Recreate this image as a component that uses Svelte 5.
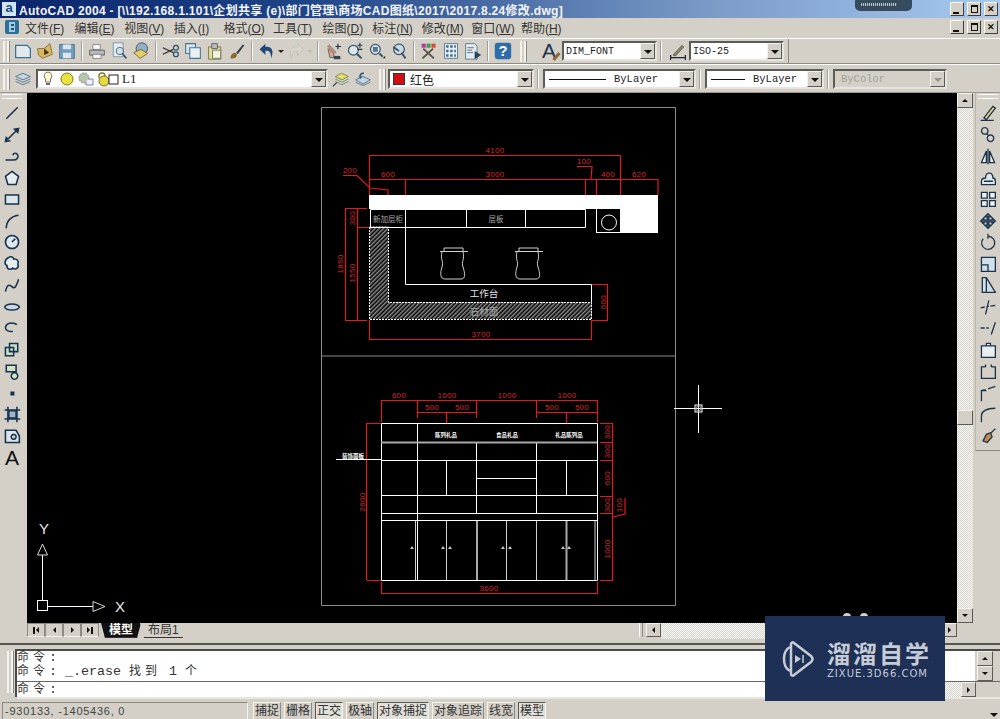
<script>
  const menus = [
    ['文件', 'F'], ['编辑', 'E'], ['视图', 'V'], ['插入', 'I'], ['格式', 'O'], ['工具', 'T'],
    ['绘图', 'D'], ['标注', 'N'], ['修改', 'M'], ['窗口', 'W'], ['帮助', 'H'],
  ];
  const statusButtons = [
    ['捕捉', false], ['栅格', false], ['正交', true], ['极轴', false],
    ['对象捕捉', true], ['对象追踪', false], ['线宽', false], ['模型', true],
  ];

  // left draw toolbar, top to bottom
  const drawIcons = [
    { d: 'M4 18 18 4' },
    { d: 'M3 19 19 3M3 19l5-1-4-4zM19 3l-5 1 4 4z' },
    { d: 'M3 16h9c6 0 7-4 6-6-1-3-5-3-6 0' },
    { d: 'M11 3l8 6-3 10H6L3 9z', f: '#e4ecf0' },
    { d: 'M3 6h16v11H3z', f: '#dde6eb' },
    { d: 'M4 20C4 11 10 5 19 4' },
    { d: 'M11 3a8 8 0 1 0 .1 0M11 11l4-4', f: '#dce7ee' },
    { d: 'M7 3c3-2 6 0 6 2 4-1 7 3 5 6 2 4-2 8-6 5-3 3-8 1-7-3-4-2-3-8 2-10', f: '#e6edf1' },
    { d: 'M3 19c2-9 5-9 8-6s5 1 8-9' },
    { d: 'M2 11c2-5 16-5 18 0-2 5-16 5-18 0', f: '#c9d8e2' },
    { d: 'M17 7C12 3 3 5 3 11c0 3 5 5 9 4' },
    { d: 'M8 3h10v10H8zM3 8h10v10H3z', f: '#cfe0c8' },
    { d: 'M4 4h12v8H4zM14 13a4 4 0 1 0 .1 0', f: '#d5e2c0' },
    { d: 'M10 10h3v3h-3z', f: '#17324e' },
    { d: 'M6 2v19M17 2v19M2 6h19M2 17h19M7 7h9v9H7z', f: '#9fb3c2' },
    { d: 'M3 4h13l4 7v8H3zM13 9a3 3 0 1 0 .1 0', f: '#dce6ec' },
  ];
  // right modify toolbar
  const modifyIcons = [
    { d: 'M6 17 17 3l3 2L9 19zM2 20h16', f: '#e6d48a' },
    { d: 'M7 2a4 4 0 1 0 .1 0M14 11a4 4 0 1 0 .1 0M9 9l3 3' },
    { d: 'M9 5v14H3zM13 5v14h6zM11 2v19', f: '#e8edf0' },
    { d: 'M3 19v-4c0-4 4-4 5-4 0-8 9-8 9 0 2 0 3 2 3 4v4zM6 15h11', f: '#dce8ef' },
    { d: 'M3 3h7v7H3zM13 3h7v7h-7zM3 13h7v7H3zM13 13h7v7h-7z', f: '#eef1f2' },
    { d: 'M11 2l4 4h-3v4h4V7l4 4-4 4v-3h-4v4h3l-4 4-4-4h3v-4H6v3l-4-4 4-4v3h4V6H7z', f: '#3b6c98' },
    { d: 'M5 7a8 8 0 1 0 6-3M11 1v6' },
    { d: 'M3 3h17v17H3zM3 12h8v8', f: '#cfe0ec' },
    { d: 'M4 2h5l11 18H4zM9 2v18', f: '#cfdde6' },
    { d: 'M2 12l5-1M9 11l3-1M14 10l6-1M12 3l-4 17' },
    { d: 'M2 11h5M9 11h3M15 19l5-15' },
    { d: 'M3 6h17v14H3zM9 6V3h5v3', f: '#e9eef0' },
    { d: 'M8 6H3v14h17V6h-5M8 6V3M15 6V3', f: 'none' },
    { d: 'M3 21V8l5-1M11 6l9-3M3 8h6' },
    { d: 'M3 21v-8C3 8 9 4 20 4' },
    { d: 'M5 17l4-8 5-2 2 5-6 7zM15 7l5-5', f: '#c08a50' },
  ];
</script>

<div class="app">
  <header class="title">
    <span class="appicon">a</span>
    <span class="title-text">AutoCAD 2004 - [\\192.168.1.101\企划共享 (e)\部门管理\商场CAD图纸\2017\2017.8.24修改.dwg]</span>
    <span class="tray"></span>
    <span class="wbtns">
      <button class="wb"><span class="min"></span></button>
      <button class="wb"><span class="max"></span></button>
      <button class="wb x">✕</button>
    </span>
  </header>

  <nav class="menu">
    <svg class="docicon" width="16" height="16" viewBox="0 0 16 16"><rect x="1" y="1" width="14" height="14" rx="2" fill="#2d6f96"/><path d="M5 3h6v10H5z" fill="#9dd0e2"/><path d="M7 5h3v2H7zM7 9h3v2H7z" fill="#244f78"/></svg>
    {#each menus as m}
      <span class="mi">{m[0]}(<u>{m[1]}</u>)</span>
    {/each}
    <span class="wbtns doc">
      <button class="wb"><span class="min"></span></button>
      <button class="wb"><span class="max"></span></button>
      <button class="wb x">✕</button>
    </span>
  </nav>

  <div class="bar bar1">
    <div class="tools">
      <i class="grip"></i>
      <svg class="t" viewBox="0 0 22 22"><path d="M2 4h14l4 4v11H2z" fill="#dfe9ee" stroke="#3f6f8f" stroke-width="1.500"/></svg>
      <svg class="t" viewBox="0 0 22 22"><path d="M2 8h8l7-6 3 13-12 5-5-4z" fill="#d9b560" stroke="#7b6a3a"/><path d="M10 8l6 5-6 3z" fill="#3c3216"/></svg>
      <svg class="t" viewBox="0 0 22 22"><path d="M2 3h18v17H2z" fill="#6f9dc0" stroke="#426a8c"/><path d="M6 3h10v6H6zM6 13h10v7H6z" fill="#dde5ea"/></svg>
      <i class="sep"></i>
      <svg class="t" viewBox="0 0 22 22"><path d="M6 3h9v6H6z" fill="#fff" stroke="#777"/><path d="M2 10h18v6H2z" fill="#b9b9c0" stroke="#555"/><path d="M6 15h10v5H6z" fill="#fff" stroke="#777"/></svg>
      <svg class="t" viewBox="0 0 22 22"><path d="M4 1h12v17H4z" fill="#e6eef2" stroke="#6b8aa0"/><circle cx="12" cy="11" r="4.500" fill="#cfe2ee" stroke="#35556e"/><path d="M15 14l5 6" stroke="#35556e" stroke-width="2"/></svg>
      <svg class="t" viewBox="0 0 22 22"><circle cx="12" cy="8" r="7" fill="#8fb0c6" stroke="#445"/><path d="M2 13l9-4 8 5-9 6z" fill="#e5cf6b" stroke="#6b5b24"/></svg>
      <i class="sep"></i>
      <svg class="t" viewBox="0 0 22 22"><path d="M1 7l13 6M1 15l13-6" stroke="#333" stroke-width="1.500"/><circle cx="17" cy="7" r="3" fill="none" stroke="#2c4f72" stroke-width="1.500"/><circle cx="17" cy="15" r="3" fill="none" stroke="#2c4f72" stroke-width="1.500"/></svg>
      <svg class="t" viewBox="0 0 22 22"><path d="M2 2h12v12H2z" fill="#d7e4ec" stroke="#4b7391" stroke-width="1.300"/><path d="M7 7h13v13H7z" fill="#e8f0f4" stroke="#4b7391" stroke-width="1.300"/></svg>
      <svg class="t" viewBox="0 0 22 22"><path d="M3 6h15v15H3z" fill="#e0dca0" stroke="#6a6a3c"/><path d="M7 2h7v6H7z" fill="#bbb" stroke="#555"/><path d="M8 10h10v10H8z" fill="#f2f2e2" stroke="#6a6a3c"/></svg>
      <svg class="t" viewBox="0 0 22 22"><path d="M3 20c0-4 2-7 6-7l2 2c0 4-3 6-8 5z" fill="#8b6c2e"/><path d="M10 13l8-10 2 1-8 11z" fill="#36404a"/></svg>
      <i class="sep"></i>
      <svg class="t" viewBox="0 0 22 22"><path d="M9 2 2 9l7 7v-5c5-1 7 2 7 9 4-9 1-15-7-14z" fill="#1f4a78"/></svg>
      <span class="drop"></span>
      <svg class="t off" viewBox="0 0 22 22"><path d="M13 2l7 7-7 7v-5c-5-1-7 2-7 9-4-9-1-15 7-14z" fill="#dad7cf" stroke="#bdbab2"/></svg>
      <span class="drop off"></span>
      <i class="sep"></i>
      <svg class="t" viewBox="0 0 22 22"><path d="M5 8l5 5 2-2v8H7z" fill="#c8a79c" stroke="#6b5248"/><path d="M5 4l9 10" stroke="#b08d80" stroke-width="4"/><path d="M17 2v7M14 5.500h7" stroke="#234" stroke-width="1.500"/><path d="M12 17h8v4h-8z" fill="#345"/></svg>
      <svg class="t" viewBox="0 0 22 22"><circle cx="9" cy="10" r="6" fill="#dbe8ef" stroke="#39536a" stroke-width="1.500"/><path d="M13 14l6 6" stroke="#39536a" stroke-width="2.500"/><path d="M17 1v6M14 4h6M14 9h6" stroke="#234" stroke-width="1.300"/></svg>
      <svg class="t" viewBox="0 0 22 22"><circle cx="9" cy="9" r="6" fill="#dbe8ef" stroke="#39536a" stroke-width="1.500"/><path d="M6 6h6v6H6z" fill="#58748a"/><path d="M14 14l4 4" stroke="#39536a" stroke-width="2.500"/><path d="M18 20h3v-3z" fill="#111"/></svg>
      <svg class="t" viewBox="0 0 22 22"><circle cx="11" cy="9" r="6.500" fill="#c9dce6" stroke="#39536a" stroke-width="1.500"/><path d="M14 13l5 7M4 6l7 5" stroke="#39536a" stroke-width="2.200"/></svg>
      <i class="sep"></i>
      <svg class="t" viewBox="0 0 22 22"><path d="M2 2h5v5H2z" fill="#b13a9c"/><path d="M8 2h5v5H8z" fill="#3d9c4a"/><path d="M14 2h5v5h-5z" fill="#d84a3a"/><path d="M4 8l13 12M3 20l13-12" stroke="#57504a" stroke-width="2.200"/></svg>
      <svg class="t" viewBox="0 0 22 22"><path d="M3 2h16v18H3z" fill="#e9eef2" stroke="#4a6c86"/><path d="M5 4h3v3H5zM10 4h3v3h-3zM15 4h2v3h-2zM5 9.500h3v3H5zM10 9.500h3v3h-3zM15 9.500h2v3h-2zM5 15h3v3H5zM10 15h3v3h-3zM15 15h2v3h-2z" fill="#3a6a92"/></svg>
      <svg class="t" viewBox="0 0 22 22"><path d="M2 2h11l3 3v16H2z" fill="#e6ebef" stroke="#4a6c86"/><path d="M4 7h8M4 10h6M4 13h7" stroke="#3a5a78"/><path d="M13 11l8 5-8 5z" fill="#24445f"/></svg>
      <i class="sep"></i>
      <svg class="t help" viewBox="0 0 22 22"><rect x="1" y="1" width="20" height="20" rx="3" fill="#2f6da8"/><text x="11" y="17" text-anchor="middle">?</text></svg>
    </div>
    <div class="tools styles">
      <i class="grip"></i>
      <span class="afont">A</span>
      <div class="combo w-font"><span>DIM_FONT</span><b></b></div>
      <i class="sep"></i>
      <svg class="t dimi" viewBox="0 0 22 22"><path d="M2 19h18M2 16v6M20 16v6" stroke="#223" stroke-width="1.500"/><path d="M5 16 16 4l2 2L8 17z" fill="#8d8775" stroke="#554"/></svg>
      <div class="combo w-dim"><span>ISO-25</span><b></b></div>
    </div>
  </div>

  <div class="bar bar2">
    <div class="tools props">
      <i class="grip"></i>
      <svg class="t" viewBox="0 0 22 22"><path d="M11 4l9 4-9 4-9-4z" fill="#c3d6e2" stroke="#496b84"/><path d="M2 11l9 4 9-4M2 14l9 4 9-4" fill="none" stroke="#496b84"/></svg>
      <div class="combo w-layer">
        <svg class="layer-i" width="78" height="16" viewBox="0 0 78 16">
          <path d="M7 1a4 4 0 0 1 2.500 7v3h-5V8A4 4 0 0 1 7 1z" fill="#fff9c8" stroke="#777"/><path d="M5 13h4" stroke="#666" stroke-width="2"/>
          <circle cx="26" cy="8" r="6" fill="#e9e23c" stroke="#77783a"/>
          <circle cx="43" cy="7" r="5" fill="#b7c5b0" stroke="#7f8e80" stroke-dasharray="2 1"/><path d="M47 8h5v6h-7v-3" fill="#eef" stroke="#7a8a96"/>
          <path d="M58 7V5a3 3 0 0 1 6 0v3" fill="none" stroke="#8a7a20" stroke-width="1.400"/><circle cx="63" cy="10" r="5" fill="#e7da3c" stroke="#7a7028"/>
          <rect x="68" y="4" width="9" height="9" fill="#fff" stroke="#222"/>
        </svg>
        <span class="l1">L1</span><b></b>
      </div>
      <svg class="t" viewBox="0 0 22 22"><path d="M12 4l8 4-8 4-8-4z" fill="#e8dc6a" stroke="#6d7a44"/><path d="M4 11l8 4 8-4M4 14l8 4 8-4" fill="none" stroke="#5f8a62"/><path d="M1 20l5-5" stroke="#234" stroke-width="1.300"/></svg>
      <svg class="t" viewBox="0 0 22 22"><path d="M11 8l9 4-9 5-9-5z" fill="#c2d6e4" stroke="#496b84"/><path d="M2 15l9 4 9-4" fill="none" stroke="#496b84"/><path d="M12 3c-4 0-6 2-5 5l-2-1 3 4 2-4-2 1c0-2 2-3 4-3z" fill="#23507c"/></svg>
    </div>
    <div class="tools props rest">
      <i class="grip"></i>
      <div class="combo w-color"><em class="swatch"></em><span>红色</span><b></b></div>
      <i class="sep"></i>
      <div class="combo w-lt1"><hr /><span>ByLayer</span><b></b></div>
      <i class="sep"></i>
      <div class="combo w-lt2"><hr /><span>ByLayer</span><b></b></div>
      <i class="sep"></i>
      <div class="combo w-plot"><span>ByColor</span><b></b></div>
    </div>
  </div>

  <main class="work">
    <aside class="side left">
      <i class="hgrip"></i>
      {#each drawIcons as ic}
        <svg class="s" viewBox="0 0 22 22"><path d={ic.d} fill={ic.f || 'none'} stroke="#17324e" stroke-width="1.900"/></svg>
      {/each}
      <span class="atext">A</span>
    </aside>

    <div class="docwin">
      <div class="canvasrow">
        <div class="canvas">
          <svg class="drawing" width="930" height="530" viewBox="27 93 930 530">
            <defs>
              <pattern id="hatch" width="3" height="3" patternUnits="userSpaceOnUse" patternTransform="rotate(45)">
                <rect width="3" height="3" fill="#000"/>
                <rect width="1.500" height="3" fill="#8a8a8a"/>
              </pattern>
            </defs>
            <path class="frame" d="M321.500 107.500H675.500V605.500H321.500ZM321.500 356H675"/>

            <!-- upper plan: red dimensions -->
            <g class="red">
              <path d="M369 155.500H620.500M369.500 155V195M620.500 155V195"/>
              <path d="M369 179.500H658M405.500 179V195M585.500 179V195M596.500 179V195M658 179V195"/>
              <path d="M343 175.500H357L370 188 388 190V195"/>
              <path d="M577 166.500H592L591 179"/>
              <path d="M345 208.500H367M345 320.500H367M345.500 208V320M357.500 208V320M357 227.500H369"/>
              <path d="M369.500 320V339.500H591.500V320"/>
              <path d="M592 284.500H608M592 320.500H608M607.500 284V320"/>
            </g>
            <g class="dim">
              <text x="495" y="153">4100</text>
              <text x="388" y="177">600</text>
              <text x="495" y="177">3000</text>
              <text x="584" y="164">100</text>
              <text x="608" y="177">400</text>
              <text x="639" y="177">620</text>
              <text x="350" y="173">200</text>
              <text x="481" y="337">3700</text>
              <text transform="translate(343 264) rotate(-90)">1850</text>
              <text transform="translate(355 218) rotate(-90)">300</text>
              <text transform="translate(355 273) rotate(-90)">1550</text>
              <text transform="translate(606 302) rotate(-90)">600</text>
            </g>

            <!-- upper plan: white geometry -->
            <rect x="369" y="195" width="289" height="14" fill="#fff"/>
            <rect x="596" y="209" width="62" height="24" fill="#fff"/>
            <rect x="597" y="209" width="23" height="23" fill="#000"/>
            <circle cx="609" cy="222.500" r="7.500" fill="none" stroke="#fff"/>
            <path d="M370 227H388V302H592V319H370Z" fill="url(#hatch)"/>
            <g class="white">
              <path d="M370.500 209.500H585.500V227.500H370.500ZM405.500 209.500V284.500H591.500V302M466.500 209V227M525.500 209V227"/>
              <path d="M369.500 227V319.500H591.500V302.500H388.500V227H369.500" stroke-dasharray="2 1"/>
            </g>
            <g class="chair">
              <path transform="translate(441 0)" d="M-1 251.500H27M3 251V248H22V251M1 252c-2 8 2 9 0 15s-2 12 3 12H20c5 0 4-6 2-12s2-7 0-15"/>
              <path transform="translate(516 0)" d="M-1 251.500H27M3 251V248H22V251M1 252c-2 8 2 9 0 15s-2 12 3 12H20c5 0 4-6 2-12s2-7 0-15"/>
            </g>
            <g class="lab">
              <text x="484" y="297" class="big">工作台</text>
              <text x="484" y="315" class="big grey">石材面</text>
              <text x="388" y="222" class="small grey">新加层柜</text>
              <text x="496" y="222" class="small grey">层板</text>
            </g>

            <!-- lower elevation: red dimensions -->
            <g class="red">
              <path d="M381.500 400.500H597.500M381.500 400V422M417.500 400V418M476.500 400V418M536.500 400V418M597.500 400V422"/>
              <path d="M417.500 412.500H476.500M536.500 412.500H597.500M446.500 412V423M566.500 412V423"/>
              <path d="M367 423.500H381M367 580.500H381M366.500 423V580"/>
              <path d="M381.500 582V593.500H597.500V582"/>
              <path d="M600 423.500H613M600 442.500H613M600 460.500H613M600 496.500H613M600 513.500H613M600 580.500H613M612.500 423V580M613 517 625 514V498"/>
            </g>
            <g class="dim">
              <text x="399" y="398">600</text>
              <text x="447" y="398">1000</text>
              <text x="507" y="398">1000</text>
              <text x="567" y="398">1000</text>
              <text x="432" y="410">500</text>
              <text x="462" y="410">500</text>
              <text x="552" y="410">500</text>
              <text x="582" y="410">500</text>
              <text x="489" y="591">3600</text>
              <text transform="translate(365 502) rotate(-90)">2600</text>
              <text transform="translate(610 432) rotate(-90)">300</text>
              <text transform="translate(610 451) rotate(-90)">300</text>
              <text transform="translate(610 478) rotate(-90)">600</text>
              <text transform="translate(610 505) rotate(-90)">300</text>
              <text transform="translate(622 505) rotate(-90)">100</text>
              <text transform="translate(610 549) rotate(-90)">1000</text>
            </g>

            <!-- lower elevation: white geometry -->
            <g class="white">
              <path d="M381.500 423.500H597.500V580.500H381.500ZM381 460.500H597M381 495.500H597M381 513.500H597M381 520.500H597"/>
              <path d="M417.500 423V580M476.500 442V514M536.500 442V514M446.500 460V496M566.500 460V496M477 478.500H536"/>
              <path d="M415.500 521V580M446.500 521V580M506.500 521V580M536.500 521V580M595 521V580" stroke="#cfcfcf"/>
              <path d="M381 442.500H597M477 521V580M566.500 521V580" stroke="#a8a8a8" stroke-width="2"/>
              <path d="M336 459.500H381"/>
            </g>
            <g class="lab">
              <text x="353" y="458" class="tiny">装饰面板</text>
              <text x="446" y="437" class="tiny">陈列礼品</text>
              <text x="507" y="437" class="tiny">食品礼品</text>
              <text x="569" y="437" class="tiny">礼品陈列品</text>
            </g>
            <path fill="#c8c8c8" d="M412 546l2 3h-4zM443 546l2 3h-4zM450 546l2 3h-4zM503 546l2 3h-4zM510 546l2 3h-4zM563 546l2 3h-4zM569 546l2 3h-4z"/>

            <!-- crosshair -->
            <g class="white">
              <path d="M698.500 385V433M674 408.500H722"/>
              <rect x="695" y="405" width="7" height="7"/>
            </g>
            <circle cx="698.500" cy="408.500" r="2.500" fill="none" stroke="#9a9a9a"/>

            <!-- ucs icon -->
            <g class="white">
              <path d="M42.500 555V600M48 606.500H93"/>
              <path d="M42.500 544l5 11h-10zM105 606.500l-12 5v-10z" stroke="#d8d8d8"/>
              <rect x="37.500" y="600.500" width="10" height="10"/>
            </g>
            <text x="44" y="534" class="ucs">Y</text>
            <text x="120" y="612" class="ucs">X</text>

            <circle cx="847" cy="617" r="4" fill="#d0d0d0"/>
            <circle cx="864" cy="617" r="4" fill="#d0d0d0"/>
          </svg>
        </div>
        <div class="vscroll">
          <button class="sb"><span class="up"></span></button>
          <div class="track v"><span class="thumb"></span></div>
          <button class="sb"><span class="down"></span></button>
        </div>
      </div>
      <div class="tabrow">
        <div class="navs">
          <button class="nav"><span class="bar-l"></span><span class="left-a"></span></button>
          <button class="nav"><span class="left-a"></span></button>
          <button class="nav"><span class="right-a"></span></button>
          <button class="nav"><span class="right-a"></span><span class="bar-l"></span></button>
        </div>
        <span class="tab active">模型</span>
        <span class="tab">布局1</span>
        <span class="tabfill"></span>
        <i class="splitter"></i>
        <button class="sb small"><span class="left-a"></span></button>
        <div class="track h"></div>
        <button class="sb small"><span class="right-a"></span></button>
      </div>
    </div>

    <aside class="side right">
      <i class="hgrip"></i>
      {#each modifyIcons as ic}
        <svg class="s" viewBox="0 0 22 22"><path d={ic.d} fill={ic.f || 'none'} stroke="#1e3347" stroke-width="1.600"/></svg>
      {/each}
    </aside>
  </main>

  <section class="command">
    <i class="vgrip"></i>
    <div class="cmdbox">
      <div class="cmdlog">
        <div class="cmdlines">
          <p><span class="wide">命令</span>:</p>
          <p><span class="wide">命令</span>: _.erase <span class="wide">找到</span> 1 <span class="wide">个</span></p>
        </div>
        <div class="cmdscroll">
          <button class="sb"><span class="up"></span></button>
          <button class="sb"><span class="down"></span></button>
        </div>
      </div>
      <div class="cmdinput">
        <p><span class="wide">命令</span>:</p>
        <div class="inscroll">
          <div class="track h"></div>
          <button class="sb small"><span class="right-a"></span></button>
        </div>
      </div>
    </div>
  </section>

  <footer class="status">
    <span class="coords">-930133, -1405436, 0</span>
    {#each statusButtons as b}
      <span class="sbtn" class:on={b[1]}>{b[0]}</span>
    {/each}
    <span class="menu-arrow"></span>
  </footer>

  <div class="logo">
    <svg width="40" height="40" viewBox="0 0 40 40" fill="none" stroke="#c6ccd6" stroke-width="2.500">
      <path d="M12 8c-4 2-6 5-6 12s2 10 6 12"/>
      <path d="M13 5c0-2 2-2 3-1l17 13c2 2 2 4 0 6L16 36c-1 1-3 1-3-1z"/>
      <path d="M17 16l6 4-6 4z" fill="#c6ccd6" stroke="none"/>
      <path d="M25 16v8" stroke-width="1.500"/>
    </svg>
    <div class="logotext">
      <strong>溜溜自学</strong>
      <small>ZIXUE.3D66.COM</small>
    </div>
  </div>
</div>

<style>
  :global(body) {
    margin: 0;
    background: #d4d0c8;
  }
  .app {
    position: relative;
    width: 1000px;
    height: 719px;
    overflow: hidden;
    display: flex;
    flex-direction: column;
    background: #d4d0c8;
    font-family: "Liberation Sans", "Noto Sans CJK SC", sans-serif;
    font-size: 12px;
    color: #222;
  }
  button {
    padding: 0;
    font: inherit;
  }

  /* title */
  .title {
    position: relative;
    height: 18px;
    flex: none;
    display: flex;
    align-items: center;
    gap: 3px;
    padding: 0 2px;
    background: linear-gradient(90deg, #0a246a 0%, #1e4488 30%, #7d9cc8 72%, #a6caf0 100%);
    color: #f4f6fa;
    font-weight: 700;
    font-size: 12px;
    white-space: nowrap;
  }
  .title-text {
    letter-spacing: 0.300px;
  }
  .appicon {
    width: 14px;
    height: 14px;
    background: #cfe4ee;
    color: #1a4a82;
    font-size: 13px;
    line-height: 12px;
    text-align: center;
  }
  .tray {
    position: absolute;
    left: 855px;
    top: 0;
    width: 57px;
    height: 11px;
    border-radius: 0 0 5px 5px;
    padding: 3px 15px 5px 6px;
    box-sizing: border-box;
    background: repeating-linear-gradient(90deg, #a9c3b4 0 1px, #4a5c6e 1px 2px) content-box, #364a60;
  }
  .wbtns {
    margin-left: auto;
    display: flex;
    gap: 3px;
  }
  .wb {
    width: 12px;
    height: 12px;
    background: #d4d0c8;
    border: 1px solid;
    border-color: #fff #404040 #404040 #fff;
    display: flex;
    align-items: center;
    justify-content: center;
    color: #111;
    font-size: 9px;
    font-weight: 700;
    box-sizing: content-box;
  }
  .min {
    width: 6px;
    height: 2px;
    background: #111;
    margin-top: 7px;
    margin-right: 2px;
  }
  .max {
    width: 5px;
    height: 5px;
    border: 1px solid #111;
    border-top-width: 2px;
  }

  /* menu */
  .menu {
    height: 20px;
    flex: none;
    display: flex;
    align-items: center;
    padding: 0 2px 2px 4px;
    box-sizing: border-box;
    font-size: 12px;
    color: #333;
    white-space: nowrap;
  }
  .docicon {
    margin-right: 5px;
  }
  .mi {
    width: 49.600px;
    flex: none;
  }
  .wbtns.doc {
    margin-left: auto;
  }

  /* toolbars */
  .bar {
    flex: none;
    display: flex;
    border-top: 1px solid #fff;
    box-sizing: border-box;
  }
  .bar1 {
    height: 26px;
    border-bottom: 1px solid #8c8a84;
  }
  .bar2 {
    height: 29px;
    border-bottom: 1px solid #9a9890;
    padding-top: 1px;
  }
  .tools {
    display: flex;
    align-items: center;
    height: 100%;
    padding-left: 3px;
  }
  .styles {
    margin-left: 3px;
    padding-right: 4px;
    border-right: 1px solid #8c8a84;
  }
  .rest {
    margin-left: 2px;
  }
  .grip {
    width: 6px;
    height: 21px;
    flex: none;
    margin-right: 3px;
    border-left: 2px solid #f4f2ec;
    border-right: 2px solid #f4f2ec;
    box-shadow: 1px 0 0 #8c8a84;
    box-sizing: border-box;
  }
  .sep {
    width: 0;
    height: 20px;
    flex: none;
    margin: 0 3px;
    border-left: 1px solid #a09e96;
    border-right: 1px solid #fff;
  }
  .rest .sep {
    margin: 0 4px 0 3px;
  }
  .t {
    width: 18px;
    height: 18px;
    flex: none;
    margin: 0 2px;
  }
  .t.off {
    opacity: 0.8;
  }
  .t.help text {
    fill: #fff;
    font-size: 18px;
    font-weight: 700;
    font-family: "Liberation Sans", sans-serif;
  }
  .t.dimi {
    margin-left: 4px;
  }
  .drop {
    width: 0;
    height: 0;
    flex: none;
    margin: 3px 1px 0 0;
    border: 3px solid transparent;
    border-top: 3px solid #222;
  }
  .drop.off {
    border-top-color: #bdbab2;
  }
  .afont {
    position: relative;
    font-size: 21px;
    color: #1d3553;
    width: 20px;
    margin-left: 13px;
    line-height: 20px;
  }
  .afont::after {
    content: '';
    position: absolute;
    right: 1px;
    bottom: 3px;
    width: 9px;
    height: 3px;
    background: #8a6a34;
    transform: rotate(-50deg);
  }
  .combo {
    position: relative;
    height: 20px;
    flex: none;
    display: flex;
    align-items: center;
    gap: 4px;
    padding-left: 2px;
    box-sizing: border-box;
    background: #fff;
    border: 2px solid;
    border-color: #5a5a56 #e6e4de #e6e4de #5a5a56;
    font-family: "Liberation Mono", "Noto Sans CJK SC", monospace;
    font-size: 10px;
    color: #222;
  }
  .combo b {
    position: absolute;
    top: 0;
    right: 0;
    bottom: 0;
    width: 15px;
    background: #d4d0c8;
    border: 1px solid;
    border-color: #f4f2ec #5a5a56 #5a5a56 #f4f2ec;
    box-sizing: border-box;
  }
  .combo b::after {
    content: '';
    position: absolute;
    left: 3px;
    top: 6px;
    border: 4px solid transparent;
    border-top: 4px solid #111;
  }
  .w-font { width: 95px; }
  .w-dim { width: 95px; }
  .w-layer { width: 292px; margin: 0 2px; padding-left: 3px; }
  .l1 {
    font-family: "Liberation Serif", serif;
    font-size: 13px;
    margin-left: -1px;
  }
  .w-color {
    width: 146px;
    font-family: "Liberation Sans", "Noto Sans CJK SC", sans-serif;
    font-size: 12px;
  }
  .w-lt1, .w-lt2, .w-plot { font-size: 10.500px; }
  .w-lt1 { width: 153px; }
  .w-lt2 { width: 119px; }
  .w-plot {
    width: 114px;
    padding-left: 6px;
    background: #d4d0c8;
    color: #a2a098;
  }
  .w-plot b::after { border-top-color: #95938c; }
  .swatch {
    width: 10px;
    height: 10px;
    background: #d00f14;
    outline: 1px solid #333;
    margin: 0 2px;
  }
  .combo hr {
    height: 1px;
    border: 0;
    margin: 0 4px 0 2px;
    background: #111;
    flex: none;
    width: 57px;
  }
  .w-lt2 hr { width: 34px; }

  /* work area */
  .work {
    height: 546px;
    flex: none;
    display: flex;
  }
  .side {
    flex: none;
    display: flex;
    flex-direction: column;
    align-items: center;
    box-sizing: border-box;
  }
  .side.left {
    width: 27px;
    padding-right: 3px;
  }
  .side.right {
    width: 25px;
    margin-left: 2px;
    height: 358px;
    border-left: 1px solid #bbb8b0;
    border-bottom: 1px solid #8c8a84;
  }
  .hgrip {
    width: 20px;
    height: 3px;
    flex: none;
    border-top: 1px solid #fff;
    border-bottom: 1px solid #fff;
    margin: 1px 0 5px;
  }
  .s {
    width: 18px;
    height: 18px;
    flex: none;
    margin-bottom: 3.500px;
  }
  .atext {
    font-size: 21px;
    line-height: 20px;
    color: #111;
  }
  .docwin {
    flex: 1;
    min-width: 0;
    display: flex;
    flex-direction: column;
  }
  .canvasrow {
    flex: 1;
    min-height: 0;
    display: flex;
  }
  .canvas {
    flex: 1;
    background: #000;
    overflow: hidden;
    min-width: 0;
  }
  .drawing {
    display: block;
  }
  .frame {
    fill: none;
    stroke: #8c8c8c;
  }
  .red {
    fill: none;
    stroke: #e01a20;
    stroke-width: 1.200;
  }
  .white {
    fill: none;
    stroke: #fff;
  }
  .dim text {
    font-family: "Liberation Sans", sans-serif;
    font-size: 8px;
    fill: #d8262c;
    text-anchor: middle;
    letter-spacing: 0.300px;
  }
  .chair {
    fill: none;
    stroke: #d0d0d0;
  }
  .lab text {
    fill: #fff;
    text-anchor: middle;
    font-family: "Noto Sans CJK SC", sans-serif;
  }
  .lab .big { font-size: 9.500px; fill: #e4e4e4; }
  .lab .small { font-size: 7.500px; }
  .lab .tiny { font-size: 5.500px; font-weight: 700; }
  .lab .grey { fill: #a8a8a8; }
  .ucs {
    fill: #e8e8e8;
    font-family: "Liberation Sans", sans-serif;
    font-size: 15px;
    text-anchor: middle;
  }
  .vscroll {
    width: 16px;
    flex: none;
    display: flex;
    flex-direction: column;
  }
  .track {
    background-color: #e6e4de;
    background-image: repeating-conic-gradient(#d4d0c8 0 25%, #fff 0 50%);
    background-size: 2px 2px;
  }
  .track.v {
    flex: 1;
    position: relative;
  }
  .thumb {
    position: absolute;
    left: 0;
    right: 0;
    top: 302px;
    height: 15px;
    background: #d4d0c8;
    border: 1px solid;
    border-color: #f4f2ec #5a5a56 #5a5a56 #f4f2ec;
    box-sizing: border-box;
  }
  .track.h {
    flex: 1;
  }
  .sb {
    width: 16px;
    height: 15px;
    flex: none;
    background: #d4d0c8;
    border: 1px solid;
    border-color: #f4f2ec #5a5a56 #5a5a56 #f4f2ec;
    display: flex;
    align-items: center;
    justify-content: center;
    box-sizing: border-box;
  }
  .sb.small {
    width: 15px;
  }
  .up, .down, .left-a, .right-a {
    width: 0;
    height: 0;
    border: 3.500px solid transparent;
  }
  .up { border-bottom-color: #111; border-top-width: 0; }
  .down { border-top-color: #111; border-bottom-width: 0; }
  .left-a { border-right-color: #111; border-left-width: 0; }
  .right-a { border-left-color: #111; border-right-width: 0; }
  .bar-l {
    width: 2px;
    height: 7px;
    background: #111;
  }
  .tabrow {
    height: 16px;
    flex: none;
    display: flex;
    align-items: stretch;
    padding-right: 16px;
    font-size: 12px;
    line-height: 15px;
  }
  .tabrow .sb {
    height: 14px;
  }
  .navs {
    display: flex;
  }
  .nav {
    width: 18px;
    height: 14px;
    background: #d4d0c8;
    border: 1px solid;
    border-color: #8c8a84 #8c8a84 #f4f2ec #8c8a84;
    display: flex;
    align-items: center;
    justify-content: center;
    gap: 1px;
    box-sizing: border-box;
  }
  .tab {
    padding: 0 8px;
    margin-left: -1px;
    height: 15px;
    background: #d4d0c8;
    color: #333;
    clip-path: polygon(0 0, 100% 0, calc(100% - 4px) 100%, 4px 100%);
    box-shadow: inset 0 -1px 0 #333;
    flex: none;
  }
  .tab.active {
    background: #111;
    color: #fff;
    font-weight: 700;
    margin-left: 2px;
  }
  .tabfill {
    flex: 0 0 452px;
  }
  .splitter {
    width: 4px;
    height: 14px;
    flex: none;
    margin-right: 3px;
    box-sizing: border-box;
    border-left: 1px solid #fff;
    border-right: 1px solid #8c8a84;
  }

  /* command */
  .command {
    flex: none;
    height: 54px;
    margin-top: 4px;
    display: flex;
    box-sizing: border-box;
    border-top: 2px solid #55544f;
    padding: 4px 0 0 7px;
    gap: 2px;
  }
  .vgrip {
    width: 6px;
    height: 42px;
    flex: none;
    margin-top: 2px;
    border-left: 2px solid #f4f2ec;
    border-right: 2px solid #f4f2ec;
    box-sizing: border-box;
    box-shadow: 1px 0 0 #8c8a84;
  }
  .cmdbox {
    flex: 1;
    min-width: 0;
    display: flex;
    flex-direction: column;
    border-top: 2px solid #4a4a46;
    border-left: 2px solid #4a4a46;
  }
  .cmdlog {
    height: 30px;
    flex: none;
    display: flex;
    background: #fff;
    border-bottom: 1px solid #666;
  }
  .cmdlines {
    flex: 1;
  }
  .command p {
    margin: 0;
    font-family: "Liberation Mono", "Noto Sans CJK SC", monospace;
    font-size: 13.330px;
    line-height: 13px;
    color: #333;
    white-space: pre;
  }
  .wide {
    font-size: 12px;
    letter-spacing: 4px;
  }
  .cmdscroll {
    width: 25px;
    box-sizing: border-box;
    padding-left: 2px;
    display: flex;
    flex-direction: column;
    background: #d4d0c8;
  }
  .cmdinput {
    flex: 1;
    display: flex;
    align-items: center;
    justify-content: space-between;
    background: #fff;
    border-bottom: 2px solid #e8e6e0;
  }
  .inscroll {
    width: 55px;
    height: 100%;
    flex: none;
    display: flex;
    align-items: stretch;
    padding-right: 24px;
    box-sizing: border-box;
    background: #d4d0c8;
  }

  /* status */
  .status {
    height: 22px;
    flex: none;
    display: flex;
    align-items: flex-start;
    font-size: 12px;
    color: #333;
    padding: 5px 0 0 2px;
    box-sizing: border-box;
    gap: 3px;
    white-space: nowrap;
  }
  .coords {
    width: 246px;
    height: 18px;
    flex: none;
    box-sizing: border-box;
    padding-left: 2px;
    margin-right: 2px;
    line-height: 17px;
    font-size: 11px;
    letter-spacing: 0.750px;
    color: #444;
    border: 1px solid;
    border-color: #8c8a84 #f4f2ec #f4f2ec #8c8a84;
  }
  .sbtn {
    height: 18px;
    line-height: 16px;
    padding: 0 1px;
    flex: none;
    box-sizing: border-box;
    border: 1px solid;
    border-color: #f4f2ec #8c8a84 #8c8a84 #f4f2ec;
  }
  .sbtn.on {
    border-color: #5a5a56 #f4f2ec #f4f2ec #5a5a56;
    background: #e2e0da;
  }
  .menu-arrow {
    position: absolute;
    right: 2px;
    bottom: 2px;
    border: 4px solid transparent;
    border-bottom-width: 0;
    border-top-color: #111;
  }

  /* watermark overlay */
  .logo {
    position: absolute;
    left: 765px;
    top: 616px;
    width: 180px;
    height: 85px;
    box-sizing: border-box;
    padding-left: 13px;
    background: #1f3057;
    display: flex;
    align-items: center;
    gap: 9px;
    color: #c6ccd6;
  }
  .logotext {
    display: flex;
    flex-direction: column;
    gap: 1px;
  }
  .logotext strong {
    font-family: "Noto Sans CJK SC", sans-serif;
    font-size: 24px;
    line-height: 28px;
    font-weight: 700;
    letter-spacing: 2px;
    white-space: nowrap;
  }
  .logotext small {
    font-family: "DejaVu Sans", sans-serif;
    font-size: 10px;
    letter-spacing: 1px;
    white-space: nowrap;
  }
</style>
